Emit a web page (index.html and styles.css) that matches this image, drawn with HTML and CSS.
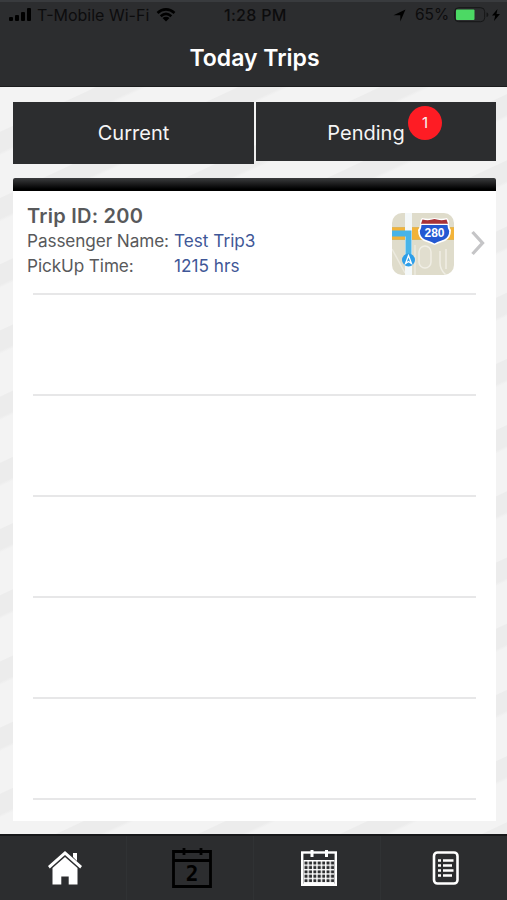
FILE: index.html
```html
<!DOCTYPE html>
<html lang="en">

<head>
    <meta charset="UTF-8">
    <meta name="viewport" content="width=device-width, initial-scale=1.0">
    <title>Today Trips</title>
    <link rel="stylesheet" href="styles.css">
</head>

<body>
    <header class="header">
        <div class="status-bar">
            <svg class="signal" width="23" height="14" viewBox="0 0 23 14">
                <rect x="0" y="9" width="4" height="4" rx="1" />
                <rect x="6" y="7" width="4" height="6" rx="1" />
                <rect x="12" y="4" width="4" height="9" rx="1" />
                <rect x="18" y="0" width="4" height="13" rx="1" />
            </svg>
            <span class="carrier">T-Mobile Wi-Fi</span>
            <svg class="wifi" width="20" height="14" viewBox="0 0 20 14">
                <path d="M1.5 5C6.5 .2 13.5 .2 18.5 5M4.7 8.2c3.3-3 7.3-3 10.6 0" fill="none" stroke="#000" stroke-width="2.6" />
                <path d="M6.5 10c2-1.8 5-1.8 7 0L10 13.5z" />
            </svg>
            <span class="clock">1:28 PM</span>
            <svg class="location" width="13" height="13" viewBox="0 0 13 13">
                <path d="M12.5 .5L7.3 12.5V6.2H.5z" />
            </svg>
            <span class="percent">65%</span>
            <svg class="battery" width="36" height="16" viewBox="0 0 36 16">
                <rect x=".7" y=".7" width="30" height="14" rx="4" fill="none" stroke="#151617" />
                <rect x="2" y="2.5" width="18.5" height="10.5" rx="1" fill="#4cd964" />
                <path d="M32.5 5.5c2.5.5 2.5 4 0 4.500z" fill="#151617" />
            </svg>
            <svg class="bolt" width="8" height="12" viewBox="0 0 8 12">
                <path d="M5.5 0L0 6.5h3.200L2 12l6-7H4.5z" />
            </svg>
        </div>
        <h1>Today Trips</h1>
    </header>

    <main class="content">
        <nav class="tabs">
            <a class="tab current">Current</a>
            <a class="tab pending">Pending<span class="badge">1</span></a>
        </nav>

        <section class="trips">
            <div class="trips-top"></div>
            <div class="trip">
                <div class="trip-info">
                    <h2>Trip ID: 200</h2>
                    <div class="field"><span class="label">Passenger Name:</span><span class="value">Test Trip3</span></div>
                    <div class="field"><span class="label">PickUp Time:</span><span class="value">1215 hrs</span></div>
                </div>
                <svg class="map" width="62" height="62" viewBox="0 0 62 62">
                    <defs>
                        <clipPath id="map-shape"><rect width="62" height="62" rx="10" /></clipPath>
                    </defs>
                    <g clip-path="url(#map-shape)">
                        <rect width="62" height="62" fill="#dfdccb" />
                        <path d="M0 36l13 24M23 32v30" fill="none" stroke="#eceadf" stroke-width="1.5" />
                        <rect x="27" y="33" width="12" height="22" rx="6" fill="#e1decf" stroke="#f0eee5" stroke-width="1.5" />
                        <path d="M48 38v12q0 7 6 12M54 36v20" fill="none" stroke="#f0eee5" stroke-width="1.5" />
                        <rect y="14" width="62" height="13" fill="#f2b33a" />
                        <path d="M0 14.5h62M0 26.5h62" stroke="#e0b658" />
                        <rect x="13" width="7" height="62" fill="#f4f8f9" />
                        <path d="M0 20.5h16.500V46" fill="none" stroke="#48b4e9" stroke-width="6" />
                        <circle cx="16.5" cy="47" r="6.5" fill="#2e9ee8" />
                        <path d="M16.5 42.500l3 8-3-2-3 2z" fill="#2e9ee8" stroke="#fff" stroke-width="1.3" />
                        <path d="M30 5q6 1.500 12.500 0 6.500 1.500 12.500 0l2 3q-1 4 2 9 0 8-6 11-6 2-10.500 4-4.500-2-10.500-4-6-3-6-11 3-5 2-9z" fill="#fff" />
                        <path d="M29.500 12h26q0 3 1.700 6 0 6-5 8.500-6 2-9.700 4-3.700-2-9.700-4-5-2.500-5-8.500 1.700-3 1.700-6z" fill="#2459d2" />
                        <path d="M30.500 6.500q6 1.500 12-.5 6 2 12 .5l1.500 4.300H29z" fill="#a83238" />
                    </g>
                    <text class="route" x="42.5" y="24" text-anchor="middle">280</text>
                </svg>
                <svg class="chevron" width="14" height="26" viewBox="0 0 14 26">
                    <path d="M1.5 2l10 11-10 11" fill="none" stroke="#c5c5c7" stroke-width="3.3" />
                </svg>
            </div>
            <div class="trip"></div>
            <div class="trip"></div>
            <div class="trip"></div>
            <div class="trip"></div>
            <div class="trip"></div>
        </section>
    </main>

    <footer class="tab-bar">
        <a class="item">
            <svg width="34" height="34" viewBox="0 0 34 34" fill="#fff">
                <path d="M25 2h4v8l-4-4z" />
                <path d="M17 0L0 15l1.800 2.500L17 4l15.200 13.500L34 15z" />
                <path d="M17 6L4.500 17v16.500h8.800v-8h7.400v8h8.800V17z" />
            </svg>
        </a>
        <a class="item">
            <svg width="40" height="40" viewBox="0 0 40 40">
                <path d="M1.500 3.500h37v35h-37zM1.500 12.500h37M12 0v7M29 0v7" fill="none" stroke="#000" stroke-width="2.800" />
                <text class="day" x="20" y="32.5" text-anchor="middle">2</text>
            </svg>
        </a>
        <a class="item">
            <svg width="36" height="36" viewBox="0 0 36 36">
                <defs>
                    <pattern id="days" x="3" y="11" width="4.4" height="4.400" patternUnits="userSpaceOnUse">
                        <rect x=".5" y=".5" width="3" height="3" fill="#2c2d2f" />
                    </pattern>
                </defs>
                <rect x="1.2" y="2.500" width="33.600" height="32.300" fill="none" stroke="#fff" stroke-width="2.400" />
                <rect x="2.500" y="10" width="31" height="24" fill="#fff" />
                <rect x="3" y="11" width="30.800" height="22" fill="url(#days)" />
                <path d="M11 0v7M25.500 0v7" stroke="#fff" stroke-width="3" />
            </svg>
        </a>
        <a class="item">
            <svg width="28" height="34" viewBox="0 0 28 34">
                <rect x="2" y="1.500" width="23.500" height="31" rx="3.500" fill="none" stroke="#fff" stroke-width="2.600" />
                <path d="M6 9.500h3M11 9.500h10.500M6 14.500h3M11 14.500h9M6 19.500h3M11 19.500h10.500M6 24.500h3M11 24.500h9" stroke="#fff" stroke-width="2.600" />
            </svg>
        </a>
    </footer>
</body>

</html>
```
FILE: styles.css
```css
* {
    box-sizing: border-box;
}

body {
    font-family: Inter, "Liberation Sans", sans-serif;
    margin: 0;
    height: 900px;
    display: flex;
    flex-direction: column;
    overflow: hidden;
    background: repeating-linear-gradient(155deg, #ececec 0, #ececec 18px, #f3f3f3 21px, #f3f3f3 59px, #ececec 60px);
}

.header {
    height: 87px;
    background: #2c2d2f;
    border-top: 2px solid #393b3e;
    border-bottom: 1px solid #1c1d1e;
}

.status-bar {
    display: flex;
    align-items: center;
    height: 26px;
    padding-left: 9px;
    font-size: 16px;
    line-height: 26px;
    white-space: nowrap;
}

.carrier {
    width: 112px;
    margin-left: 5px;
    color: #0c0c0d;
}

.wifi {
    margin-left: 7px;
}

.clock {
    width: 64px;
    margin-left: 48px;
    font-weight: 500;
    letter-spacing: 0.3px;
    color: #0c0c0d;
}

.location {
    margin-left: 105px;
}

.percent {
    width: 34px;
    margin-left: 9px;
    font-size: 15.5px;
    color: #0c0c0d;
}

.battery {
    margin-left: 5px;
}

.bolt {
    margin-left: 2px;
}

h1 {
    margin: 15px 0 0;
    padding-left: 2px;
    font-size: 23px;
    font-weight: 600;
    line-height: 30px;
    text-align: center;
    color: #fff;
}

.content {
    flex: 1;
    padding: 15px 11px 13px 13px;
}

.tabs {
    display: flex;
    gap: 2px;
    height: 62px;
    margin-bottom: 14px;
}

.tab {
    position: relative;
    flex: none;
    width: 241px;
    height: 62px;
    background: #2c2d2f;
    color: #f5f5f5;
    font-size: 20px;
    line-height: 63px;
    text-align: center;
}

.pending {
    width: 240px;
    height: 59px;
    padding-right: 20px;
}

.badge {
    position: absolute;
    top: 4px;
    right: 54px;
    width: 34px;
    height: 34px;
    border-radius: 50%;
    background: #fe1c24;
    font-size: 15px;
    line-height: 34px;
}

.trips {
    height: 643px;
    background: #fff;
}

.trips-top {
    height: 13px;
    border-radius: 2px 2px 0 0;
    background: linear-gradient(#3b3c3e, #000 85%);
}

.trip {
    display: flex;
    height: 101px;
    margin: 0 20px;
    border-bottom: 2px solid #e7e7e8;
}

.trip:nth-child(2) {
    height: 103.5px;
}

.trip-info {
    width: 365px;
    margin-left: -6px;
    padding-top: 13px;
    flex-shrink: 0;
}

h2 {
    margin: 0;
    font-size: 20px;
    font-weight: 600;
    letter-spacing: 0.25px;
    line-height: 25px;
    color: #58595b;
}

.field {
    display: flex;
    font-size: 17.2px;
    line-height: 24.5px;
    color: #58595b;
    white-space: nowrap;
}

.label {
    width: 147px;
    letter-spacing: -0.1px;
}

.value {
    color: #3f5797;
}

.map {
    margin-top: 22px;
    flex-shrink: 0;
}

.route {
    font: bold 12px "Liberation Sans", sans-serif;
    fill: #fff;
}

.chevron {
    margin: 39px 0 0 17px;
    flex-shrink: 0;
}

.tab-bar {
    display: flex;
    height: 66px;
    background: #2c2d2f;
    border-top: 2px solid #17181a;
}

.item {
    flex: 1;
    display: flex;
    justify-content: center;
    align-items: center;
    padding-left: 3px;
    border-right: 1px solid #303234;
}

.item:last-child {
    border-right: none;
}

.day {
    font: bold 21px "DejaVu Sans Mono", monospace;
}
```
